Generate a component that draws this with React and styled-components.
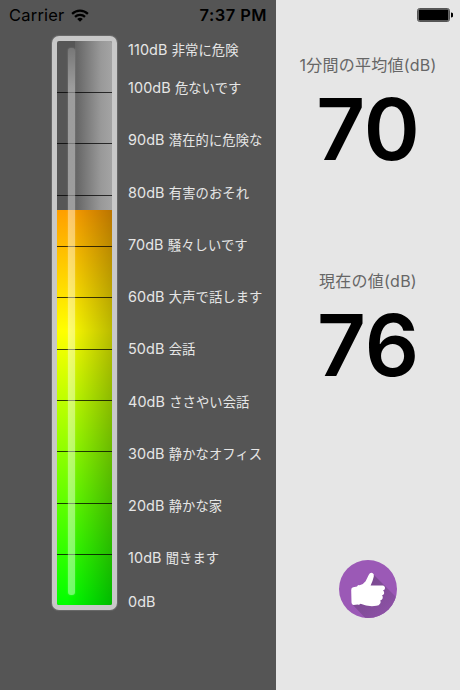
import React from 'react';
import styled, { createGlobalStyle } from 'styled-components';

const levels = [
  { value: '110dB', label: '非常に危険' },
  { value: '100dB', label: '危ないです' },
  { value: '90dB', label: '潜在的に危険な' },
  { value: '80dB', label: '有害のおそれ' },
  { value: '70dB', label: '騒々しいです' },
  { value: '60dB', label: '大声で話します' },
  { value: '50dB', label: '会話' },
  { value: '40dB', label: 'ささやい会話' },
  { value: '30dB', label: '静かなオフィス' },
  { value: '20dB', label: '静かな家' },
  { value: '10dB', label: '聞きます' },
  { value: '0dB' },
];

const readings = [
  { title: '1分間の平均値(dB)', value: 70 },
  { title: '現在の値(dB)', value: 76 },
];

const App = () => {
  return (
    <>
      <GlobalStyle />
      <Screen>
        <MeterPane>
          <StatusBar>
            <Carrier>Carrier</Carrier>
            <WifiIcon />
            <Clock>7:37 PM</Clock>
          </StatusBar>
          <MeterBody>
            <Tube>
              <Fill />
              <Shade />
              <Ticks>
                {levels.slice(1).map(({ value }) => (
                  <Tick key={value} />
                ))}
              </Ticks>
              <Shine />
            </Tube>
            <Scale>
              {levels.map(({ value, label }) => (
                <Level key={value}>
                  {value} {label && <LevelLabel>{label}</LevelLabel>}
                </Level>
              ))}
            </Scale>
          </MeterBody>
        </MeterPane>
        <ReadingPane>
          <BatteryBar>
            <BatteryIcon />
          </BatteryBar>
          {readings.map(({ title, value }) => (
            <Reading key={title}>
              <ReadingTitle>{title}</ReadingTitle>
              <ReadingValue>{value}</ReadingValue>
            </Reading>
          ))}
          <LikeButton aria-label="Like">
            <ThumbIcon />
          </LikeButton>
        </ReadingPane>
      </Screen>
    </>
  );
};

const WifiIcon = () => (
  <svg width="18" height="13" viewBox="0 0 18 13" fill="none" stroke="#000">
    <path d="M1.1 4.9A11.3 11.3 0 0 1 16.9 4.9" strokeWidth="2.2" />
    <path d="M4 7.9A7.1 7.1 0 0 1 14 7.9" strokeWidth="2.2" />
    <path d="M9 12.8L6.2 10A4 4 0 0 1 11.8 10Z" fill="#000" stroke="none" />
  </svg>
);

const BatteryIcon = () => (
  <svg width="36" height="14" viewBox="0 0 36 14">
    <rect x="0.5" y="0.5" width="32" height="13" rx="2.2" fill="#aaa" stroke="#555" />
    <rect x="1.6" y="1.4" width="29.8" height="11.2" rx="1" fill="#000" />
    <path d="M34 4.6a2.4 2.4 0 0 1 0 4.8z" fill="#000" />
  </svg>
);

const ThumbIcon = () => (
  <svg width="58" height="58" viewBox="0 0 58 58">
    <defs>
      <clipPath id="disc">
        <circle cx="29" cy="29" r="29" />
      </clipPath>
      <linearGradient id="cast" x1="0.3" y1="0.3" x2="0.8" y2="0.8">
        <stop offset="0" stopColor="#7c4a92" />
        <stop offset="1" stopColor="#8e52a7" />
      </linearGradient>
    </defs>
    <circle cx="29" cy="29" r="29" fill="#9b59b6" />
    <path
      clipPath="url(#disc)"
      d="M34 14L62 42V62H30L13 44L30 30Z"
      fill="url(#cast)"
    />
    <path
      d="M12.2 30Q12.2 27.6 14.2 27.3L18 26.6Q18.6 24.6 20.6 25.2Q24.2 24.6 26.6 21.2L29.8 14.8Q31 12.2 33.4 12.9Q35.4 13.6 34.8 16.4Q33.8 21 31.6 25.4H43.6Q46.2 25.8 46 28.2Q45.8 30 44 30.6Q45.6 31.7 45.1 33.6Q44.6 35.3 43 35.6Q44.3 36.8 43.6 38.5Q43 40 41.2 40.4Q42.2 41.8 41.2 43.4Q40 45.5 37.4 45.8Q29 47 21.5 43.8Q20 45.4 18.6 44.4L14.6 44.9Q12.6 45 12.5 42.5Z"
      fill="#fff"
    />
  </svg>
);

const GlobalStyle = createGlobalStyle`
  * {
    box-sizing: border-box;
  }

  body {
    margin: 0;
    font-family: Inter, 'Noto Sans CJK JP', sans-serif;
  }
`;

const Screen = styled.main`
  display: flex;
  width: 460px;
  height: 690px;
  overflow: hidden;
`;

const MeterPane = styled.section`
  width: 276px;
  background-color: #555;
`;

const StatusBar = styled.header`
  display: flex;
  align-items: center;
  height: 30px;
  padding: 0 9px;
  font-size: 16.5px;
  white-space: nowrap;
`;

const Carrier = styled.span`
  margin-right: 7px;
  letter-spacing: 0.2px;
`;

const Clock = styled.span`
  margin-left: auto;
  font-weight: 600;
  letter-spacing: 0.45px;
`;

const MeterBody = styled.div`
  display: flex;
  padding: 6px 0 0 52px;
`;

const Tube = styled.div`
  position: relative;
  width: 65px;
  height: 574px;
  border: 5px solid #c8c8c8;
  border-radius: 7px;
  box-shadow: 0 0 1px 1px rgba(140, 140, 140, 0.4);
  background-color: #565656;
  overflow: hidden;
`;

const Fill = styled.div`
  height: 100%;
  background: linear-gradient(
    180deg,
    transparent 169px,
    #ff9f00 169px,
    #ffff00 290px,
    #00ff00 100%
  );
`;

/* light falling across the glass: grey over the empty part, dark over the fill */
const Shade = styled.div`
  position: absolute;
  inset: 0;
  background:
    linear-gradient(90deg, transparent 18px, #636363 18px, #999 44px, #a4a4a4 100%) 0 0 /
      100% 169px no-repeat,
    linear-gradient(90deg, transparent 10px, rgba(0, 0, 0, 0.27) 100%) 0 169px /
      100% 395px no-repeat;
`;

const Ticks = styled.div`
  position: absolute;
  inset: 0;
  display: grid;
  grid-template-rows: repeat(11, 51.3px);
  padding-top: 0.9px;
`;

const Tick = styled.div`
  border-bottom: 1px solid rgba(0, 0, 0, 0.75);

  &:last-child {
    border-bottom: 0;
  }
`;

const Shine = styled.div`
  position: absolute;
  top: 7px;
  left: 11px;
  width: 7px;
  height: 547px;
  border-radius: 3px;
  background: linear-gradient(
    180deg,
    rgba(255, 255, 255, 0.2),
    rgba(255, 255, 255, 0.42) 40px
  );
  box-shadow: 0 0 2px rgba(255, 255, 255, 0.25);
`;

const Scale = styled.div`
  display: grid;
  grid-template-rows: 38px repeat(9, 52.25px) 43.7px 20px;
  padding: 4px 0 0 11px;
`;

const Level = styled.div`
  color: #e6e6e6;
  font-size: 14.4px;
  line-height: 20px;
  letter-spacing: 0.1px;
  white-space: nowrap;
`;

const LevelLabel = styled.span`
  font-size: 13.3px;
  letter-spacing: 0.08px;
`;

const ReadingPane = styled.section`
  display: flex;
  flex-direction: column;
  align-items: center;
  width: 184px;
  background-color: #e6e6e6;
`;

const BatteryBar = styled.div`
  display: flex;
  justify-content: flex-end;
  width: 100%;
  height: 53px;
  padding: 8px 7px 0 0;
`;

const Reading = styled.div`
  height: 216px;
  text-align: center;
`;

const ReadingTitle = styled.div`
  color: #666;
  font-size: 16px;
  line-height: 24px;
  letter-spacing: 0.25px;
`;

const ReadingValue = styled.div`
  color: #000;
  font-size: 85px;
  font-weight: 600;
  line-height: 106px;
`;

const LikeButton = styled.button`
  width: 58px;
  height: 58px;
  margin-top: 75px;
  padding: 0;
  border: 0;
  border-radius: 50%;
  background: none;
  cursor: pointer;
`;

export default App;
